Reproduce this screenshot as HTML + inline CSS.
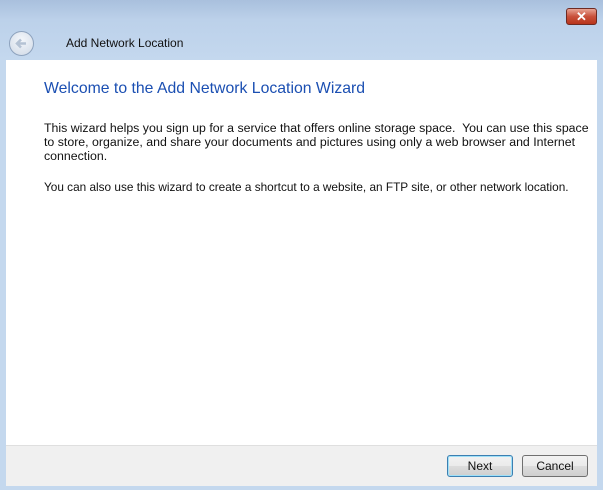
<!DOCTYPE html>
<html><head><style>
*{margin:0;padding:0;box-sizing:border-box}
body{width:603px;height:490px;overflow:hidden;background:linear-gradient(#a9c0dd 0px,#bcd1ea 20px,#c4d8ee 60px,#c4d8ee 490px);font-family:"Liberation Sans",sans-serif;position:relative}
.close{position:absolute;left:566px;top:8px;width:31px;height:17px;border:1px solid #6e2a22;border-radius:3px;background:linear-gradient(#e8a393,#c9513b 50%,#b8341c);color:#fff;font-size:13px;font-weight:bold;text-align:center;line-height:15px}
.back{position:absolute;left:9px;top:31px;width:25px;height:25px;border-radius:50%;border:1px solid #8ea3be;background:radial-gradient(circle at 50% 35%,#f4f7fb,#cfd9e6)}
.hdr{position:absolute;left:66px;top:36px;font-size:12px;color:#111}
.main{position:absolute;left:6px;top:60px;width:591px;height:385px;background:#fff}
.foot{position:absolute;left:6px;top:445px;width:591px;height:41px;background:#f0f0f0;border-top:1px solid #dfdfdf}
h1{position:absolute;left:44px;top:80px;font-size:15.8px;font-weight:normal;color:#1b4fb2;white-space:nowrap}
p{position:absolute;left:44px;font-size:12.35px;color:#111;line-height:14px;white-space:nowrap}
.btn{position:absolute;top:455px;width:66px;height:22px;border:1px solid #707070;border-radius:3px;background:linear-gradient(#f2f2f2,#ebebeb 50%,#dddddd 50%,#cfcfcf);font-size:12px;text-align:center;line-height:20px;color:#111}
.next{left:447px;border-color:#3c7fb1;box-shadow:inset 0 0 0 1px #9fe0f8}
.cancel{left:522px}
</style></head><body>
<div class="close">✕</div>
<div class="back"><svg width="23" height="23" viewBox="0 0 23 23" style="display:block"><path d="M16 11.5H7M11 7.5l-4 4 4 4" stroke="#b4c2d4" stroke-width="2.5" fill="none"/></svg></div>
<div class="hdr">Add Network Location</div>
<div class="main"></div>
<div class="foot"></div>
<h1>Welcome to the Add Network Location Wizard</h1>
<p style="top:121px">This wizard helps you sign up for a service that offers online storage space.&nbsp; You can use this space<br>to store, organize, and share your documents and pictures using only a web browser and Internet<br>connection.</p>
<p style="top:180px;font-size:11.8px">You can also use this wizard to create a shortcut to a website, an FTP site, or other network location.</p>
<div class="btn next">Next</div>
<div class="btn cancel">Cancel</div>
</body></html>
